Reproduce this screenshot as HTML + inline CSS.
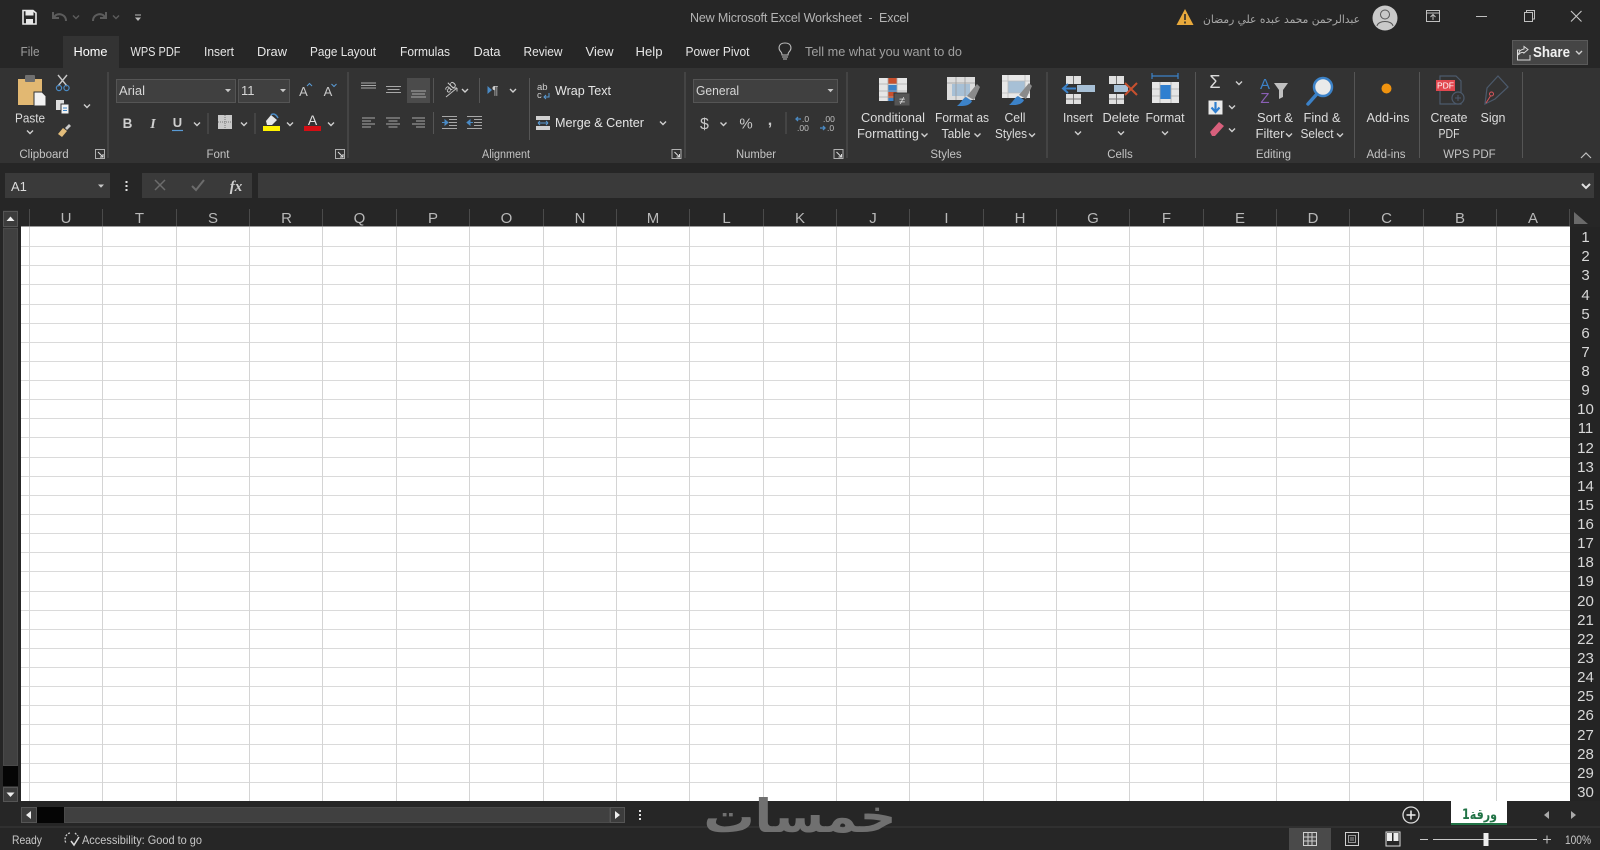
<!DOCTYPE html>
<html lang="en"><head><meta charset="utf-8"><title>New Microsoft Excel Worksheet - Excel</title>
<style>
html,body{margin:0;padding:0;background:#262626;width:1600px;height:850px;overflow:hidden}
svg{display:block}
text{font-family:"Liberation Sans",sans-serif;fill:#d6d6d6;font-size:13px}
.m{text-anchor:middle}
.l{font-size:11.5px;fill:#c4c4c4;text-anchor:middle}
.t{font-size:13px;fill:#e6e6e6}
.r{font-size:13px;fill:#dcdcdc;text-anchor:middle}
.h{font-size:15px;fill:#b8b8b8;text-anchor:middle}
.n{font-size:15px;fill:#d8d8d8;text-anchor:middle}
.s{stroke:#555;stroke-width:1;fill:none}
.li{stroke:#a8a8a8;stroke-width:1;fill:none}
</style></head><body>
<svg width="1600" height="850" viewBox="0 0 1600 850" xmlns="http://www.w3.org/2000/svg">
<defs>
<path id="c" d="M-3-1.5 0 1.5 3-1.5" fill="none" stroke="#cfcfcf" stroke-width="1.4"/>
<path id="cd" d="M-3-1.5 0 1.5 3-1.5" fill="none" stroke="#5c5c5c" stroke-width="1.4"/>
<path id="tri" d="M-3-1.5H3L0 1.8Z" fill="#c8c8c8"/>
<g id="lau"><path d="M-4.5-4.5H4.5V4.5H-4.5Z" fill="none" stroke="#b0b0b0"/><path d="M-2-2 3 3M3 0V3H0" fill="none" stroke="#dcdcdc"/></g>
</defs>

<rect width="1600" height="850" fill="#262626"/>
<!-- title bar -->
<path d="M23 10.500H33L36 13V24H23Z" fill="none" stroke="#e8e8e8" stroke-width="1.600"/>
<rect x="25.500" y="11" width="8" height="4.500" fill="#e8e8e8"/><rect x="26" y="19" width="7" height="5" fill="#e8e8e8"/>
<path d="M66 21C66 15 60 13 56 15L53 18M53 12V18H59" fill="none" stroke="#5c5c5c" stroke-width="2"/>
<use href="#cd" x="76" y="17"/>
<path d="M103 21C103 15 97 13 93 15L90 18M90 12V18H96" fill="none" stroke="#5c5c5c" stroke-width="2" transform="matrix(-1 0 0 1 196 0)"/>
<use href="#cd" x="116" y="17"/>
<path d="M135 15H141" stroke="#bbb"/><path d="M135 17.500H141L138 21Z" fill="#bbb"/>
<text x="690" y="22" style="font-size:12.500px;fill:#b4b4b4" textLength="219" lengthAdjust="spacing" xml:space="preserve">New Microsoft Excel Worksheet  -  Excel</text>
<path d="M1185 9 1193.500 25H1176.500Z" fill="#e8a93c"/><path d="M1185 14V20M1185 21.500V23.500" stroke="#2a2a2a" stroke-width="1.600"/>
<text x="1203" y="23" style="font-family:'DejaVu Sans',sans-serif;font-size:11px;fill:#a8a8a8" textLength="157" lengthAdjust="spacingAndGlyphs">عبدالرحمن محمد عبده علي رمضان</text>
<circle cx="1385" cy="18" r="12.500" fill="#c9c9c9"/><circle cx="1385" cy="14.500" r="4.500" fill="none" stroke="#555"/><path d="M1377 26C1378 20 1392 20 1393 26" fill="none" stroke="#555"/>
<path d="M1426.500 10.500H1439.500V21.500H1426.500ZM1426.500 13H1439.500M1433 20V15M1430.500 17 1433 14.500 1435.500 17" fill="none" stroke="#c0c0c0"/>
<path d="M1476 16.500H1487" stroke="#c0c0c0"/>
<path d="M1524.500 12.500H1532.500V21.500H1524.500ZM1526.500 12V10.500H1534.500V19H1533" fill="none" stroke="#c0c0c0"/>
<path d="M1571 11 1581.500 21.500M1581.500 11 1571 21.500" stroke="#c8c8c8" stroke-width="1.100"/>

<!-- tabs -->
<rect x="63" y="36" width="56" height="33" fill="#333"/>
<text x="20.500" y="56" style="fill:#9c9c9c" textLength="19" lengthAdjust="spacingAndGlyphs">File</text>
<text class="t" x="73.500" y="56" style="fill:#fff" textLength="34" lengthAdjust="spacingAndGlyphs">Home</text>
<text class="t" x="130.500" y="56" textLength="50" lengthAdjust="spacingAndGlyphs">WPS PDF</text>
<text class="t" x="204" y="56" textLength="30" lengthAdjust="spacingAndGlyphs">Insert</text>
<text class="t" x="257" y="56" textLength="30" lengthAdjust="spacingAndGlyphs">Draw</text>
<text class="t" x="310" y="56" textLength="66" lengthAdjust="spacingAndGlyphs">Page Layout</text>
<text class="t" x="400" y="56" textLength="50" lengthAdjust="spacingAndGlyphs">Formulas</text>
<text class="t" x="473.500" y="56" textLength="27" lengthAdjust="spacingAndGlyphs">Data</text>
<text class="t" x="523.500" y="56" textLength="39" lengthAdjust="spacingAndGlyphs">Review</text>
<text class="t" x="585.500" y="56" textLength="28" lengthAdjust="spacingAndGlyphs">View</text>
<text class="t" x="635.500" y="56" textLength="27" lengthAdjust="spacingAndGlyphs">Help</text>
<text class="t" x="685.500" y="56" textLength="64" lengthAdjust="spacingAndGlyphs">Power Pivot</text>
<path d="M781 52C778 49 778 43 785 43S792 49 789 52C788 53 788 54 788 55H782C782 54 782 53 781 52ZM782 57H788M783 59H787" fill="none" stroke="#bdbdbd" stroke-width="1.100"/>
<text x="805" y="56" style="fill:#a0a0a0" textLength="157" lengthAdjust="spacingAndGlyphs">Tell me what you want to do</text>
<rect x="1512.500" y="40.500" width="75" height="24" fill="#454545" stroke="#5a5a5a"/>
<path d="M1520 50H1517.500V60H1530V55M1524 46.500 1528 49.500 1524 53C1524 52 1520 52 1518.500 55C1519 50 1522 49.500 1524 49Z" fill="none" stroke="#dcdcdc"/>
<text x="1533" y="57" style="font-size:14.500px;font-weight:bold;fill:#f0f0f0" textLength="37" lengthAdjust="spacingAndGlyphs">Share</text>
<use href="#c" x="1579" y="52.500"/>

<!-- ribbon -->
<rect y="68" width="1600" height="95" fill="#333"/>
<path class="s" d="M108 72V158M348 72V158M685 72V158M847 72V158M1047 72V158M1195.500 72V158M1354.500 72V158M1419.500 72V158M1522.500 72V158"/>
<path class="s" d="M433.500 78V103M479.500 78V103M529.500 78V140M433.500 112V134M208 113V134M255 113V134M786 112V134"/>
<!-- clipboard -->
<path d="M18 79H42V105H18Z" fill="#e2b872"/><rect x="25" y="75" width="10" height="7" rx="1" fill="#6f6f6f"/>
<path d="M34 92H42L46 96V106H34Z" fill="#f2f2f2" stroke="#333"/>
<text class="r" x="30" y="122.500" textLength="30" lengthAdjust="spacingAndGlyphs">Paste</text><use href="#c" x="30" y="132"/>
<path d="M58 75 67 86M67 75 58 86" stroke="#c8c8c8" stroke-width="1.400"/><circle cx="59" cy="88" r="2.600" fill="none" stroke="#4a8ac4" stroke-width="1.200"/><circle cx="66.500" cy="88" r="2.600" fill="none" stroke="#4a8ac4" stroke-width="1.200"/>
<path d="M56 100H64V110H56Z" fill="#ddd"/><path d="M61 104H69V114H61Z" fill="#f2f2f2" stroke="#333"/><path d="M63 108H67M63 110.500H67" stroke="#3c86c8"/>
<path d="M62 137 58 134 63 128 67 131Z" fill="#e3bd7b"/><path d="M65 128 69 124 71 126 67 130Z" fill="#ccc"/>
<use href="#c" x="87" y="106"/>
<text class="l" x="44" y="158">Clipboard</text><use href="#lau" x="100" y="154"/>
<!-- font -->
<rect x="116.500" y="79.500" width="119" height="23" fill="#404040" stroke="#555"/>
<text x="119" y="95" style="fill:#d6d6d6">Arial</text><use href="#tri" x="228" y="90.500"/>
<rect x="238.500" y="79.500" width="51" height="23" fill="#404040" stroke="#555"/>
<text x="241" y="95">11</text><use href="#tri" x="283" y="90.500"/>
<text class="m" x="303.500" y="96" style="font-size:13px;fill:#c8c8c8">A</text><path d="M307 86 309.500 83.500 312 86" fill="none" stroke="#5a9bd5"/>
<text class="m" x="328" y="96" style="font-size:13px;fill:#c8c8c8">A</text><path d="M331.500 84 334 86.500 336.500 84" fill="none" stroke="#5a9bd5"/>
<text class="m" x="127.500" y="128" style="font-size:13.500px;font-weight:bold;fill:#d0d0d0">B</text>
<text class="m" x="153" y="128" style="font-size:14px;font-weight:bold;font-style:italic;font-family:'Liberation Serif',serif;fill:#d0d0d0">I</text>
<text class="m" x="177.500" y="127" style="font-size:13px;font-weight:bold;fill:#d0d0d0">U</text><path d="M172 130.500H183" stroke="#5a9bd5" stroke-width="1.200"/>
<use href="#c" x="197" y="124"/>
<rect x="218" y="115" width="14" height="14" fill="#c9c9c9"/><path d="M225 115V129M218 122H232" stroke="#777" stroke-dasharray="1 1"/>
<use href="#c" x="244" y="124"/>
<path d="M266 121 271 115 277 120 272 125H267Z" fill="#e6e6e6"/><path d="M271 115C273 113 276 114 278 118" fill="none" stroke="#4a8ac4" stroke-width="1.500"/>
<rect x="263" y="126" width="17" height="5" fill="#fff200"/><use href="#c" x="290" y="124"/>
<text class="m" x="312.500" y="125" style="font-size:14px;fill:#e0e0e0">A</text><rect x="304" y="126" width="17" height="5" fill="#d40e14"/><use href="#c" x="331" y="124"/>
<text class="l" x="218" y="158">Font</text><use href="#lau" x="340" y="154"/>
<!-- alignment -->
<rect x="407" y="78" width="23" height="25" fill="#4b4b4b"/>
<path class="li" d="M361 83H376M361 85.500H376M361 88H376"/>
<path class="li" d="M386 86.500H401M387.500 89.500H399.500M386 92.500H401"/>
<path class="li" d="M411 91H426M412 94H425M411 97H426"/>
<text x="446" y="92" transform="rotate(-45 449 90)" style="font-size:11px;fill:#cfcfcf">ab</text><path d="M446 97 457 88M457 88V91.500M457 88H453.500" fill="none" stroke="#c0c0c0"/>
<use href="#c" x="465" y="90.500"/>
<path d="M487.500 86V94L492 90Z" fill="#4a8ac4"/><text x="492" y="94.500" style="font-size:12px;fill:#cfcfcf">¶</text>
<use href="#c" x="513" y="90.500"/>
<path class="li" d="M362 118H375M362 121H371M362 124H375M362 127H371"/>
<path class="li" d="M386 118H400M388.500 121H397.500M386 124H400M388.500 127H397.500"/>
<path class="li" d="M412 118H425M416 121H425M412 124H425M416 127H425"/>
<path class="li" d="M442 116.500H457M449 119.500H457M449 122.500H457M449 125.500H457M442 128.500H457"/><path d="M442 122.500H447M445 120 448 122.500 445 125Z" fill="#4a8ac4" stroke="#4a8ac4"/>
<path class="li" d="M467 116.500H482M474 119.500H482M474 122.500H482M474 125.500H482M467 128.500H482"/><path d="M468 122.500H473M470 120 467 122.500 470 125Z" fill="#4a8ac4" stroke="#4a8ac4"/>
<text x="537" y="90" style="font-size:9.500px;fill:#cfcfcf">ab</text><text x="537" y="98" style="font-size:9.500px;fill:#cfcfcf">c</text><path d="M549 93V97H544M546 95 544 97 546 99" fill="none" stroke="#5a9bd5"/>
<text class="t" x="555" y="95" textLength="56" lengthAdjust="spacingAndGlyphs">Wrap Text</text>
<rect x="536" y="116" width="14" height="14" fill="#d0d0d0"/><rect x="536" y="120" width="14" height="6" fill="#333"/><path d="M538 123H548M538 123 540 121M538 123 540 125M548 123 546 121M548 123 546 125" fill="none" stroke="#5a9bd5"/>
<text class="t" x="555" y="127" textLength="89" lengthAdjust="spacingAndGlyphs">Merge &amp; Center</text><use href="#c" x="663" y="123"/>
<text class="l" x="506" y="158" textLength="48" lengthAdjust="spacingAndGlyphs">Alignment</text><use href="#lau" x="676.500" y="154"/>
<!-- number -->
<rect x="693.500" y="79.500" width="144" height="23" fill="#404040" stroke="#555"/>
<text x="696" y="95" textLength="43" lengthAdjust="spacingAndGlyphs">General</text><use href="#tri" x="830.500" y="90.500"/>
<text class="m" x="704.500" y="129" style="font-size:16px;fill:#c8c8c8">$</text><use href="#c" x="723.500" y="124"/>
<text class="m" x="746" y="128.500" style="font-size:15px;fill:#c8c8c8">%</text>
<text class="m" x="770" y="125" style="font-size:16px;font-weight:bold;fill:#c8c8c8">,</text>
<text x="802" y="122" style="font-size:8.500px;fill:#c0c0c0">.0</text><text x="797" y="131" style="font-size:8.500px;fill:#c0c0c0">.00</text><path d="M796 119H801M798 117 796 119 798 121" fill="none" stroke="#4a8ac4" stroke-width="1.300"/>
<text x="823" y="122" style="font-size:8.500px;fill:#c0c0c0">.00</text><text x="827" y="131" style="font-size:8.500px;fill:#c0c0c0">.0</text><path d="M820 128H825M823 126 825 128 823 130" fill="none" stroke="#4a8ac4" stroke-width="1.300"/>
<text class="l" x="756" y="158" textLength="40" lengthAdjust="spacingAndGlyphs">Number</text><use href="#lau" x="838.500" y="154"/>
<!-- styles -->
<rect x="879" y="78" width="28" height="23" fill="#e6e6e6"/>
<rect x="888" y="78" width="9" height="6" fill="#c8502e"/><rect x="888" y="85" width="9" height="7" fill="#3c82c8"/><rect x="888" y="92" width="9" height="6" fill="#c8502e"/><rect x="888" y="98" width="9" height="3" fill="#3c82c8"/>
<path d="M879 84H907M879 91H907M879 97H907M888 78V101M897 78V101" stroke="#aaa" stroke-width=".8"/>
<rect x="894" y="93" width="16" height="13" fill="#555" stroke="#333"/><text class="m" x="902" y="104" style="font-size:11px;fill:#e6e6e6">≠</text>
<rect x="947" y="77" width="28" height="23" fill="#dcdcdc"/><rect x="952" y="84" width="18" height="12" fill="#a7c0d6"/><path d="M947 83H975M956 77V100M965 77V100" stroke="#999" stroke-width=".8"/>
<path d="M962 106C958 106 957 106 957 106 961 103 963 98 966 97L972 101C971 104 967 106 962 106Z" fill="#3c82c8"/><path d="M967 96 977 84 980 87 974 100Z" fill="#8a8a8a"/>
<rect x="1002" y="75" width="28" height="23" fill="#e8e8e8"/><rect x="1008" y="81" width="17" height="12" fill="#a7c0d6"/><path d="M1002 81H1030M1008 75V98M1025 75V98M1002 93H1030" stroke="#bbb" stroke-width=".8"/>
<path d="M1014 105C1010 105 1009 105 1009 105 1013 102 1015 97 1018 96L1024 100C1023 103 1019 105 1014 105Z" fill="#3c82c8"/><path d="M1019 95 1029 83 1032 86 1026 99Z" fill="#8a8a8a"/>
<text class="r" x="893" y="122" textLength="64" lengthAdjust="spacingAndGlyphs">Conditional</text><text class="r" x="888" y="138" textLength="62" lengthAdjust="spacingAndGlyphs">Formatting</text><use href="#c" x="924.500" y="135"/>
<text class="r" x="962" y="122" textLength="54" lengthAdjust="spacingAndGlyphs">Format as</text><text class="r" x="956" y="138" textLength="29" lengthAdjust="spacingAndGlyphs">Table</text><use href="#c" x="977.500" y="135"/>
<text class="r" x="1015" y="122" textLength="21" lengthAdjust="spacingAndGlyphs">Cell</text><text class="r" x="1011" y="138" textLength="32" lengthAdjust="spacingAndGlyphs">Styles</text><use href="#c" x="1032" y="135"/>
<text class="l" x="946" y="158">Styles</text>
<!-- cells -->
<rect x="1066" y="76" width="15" height="8" fill="#e0e0e0"/><rect x="1066" y="94" width="15" height="10" fill="#e0e0e0"/><path d="M1073.500 76V84M1073.500 94V104M1066 99H1081" stroke="#777"/>
<rect x="1077" y="85" width="18" height="7" fill="#a7c0d6"/><path d="M1064 88.500H1076M1068 84 1063 88.500 1068 93" fill="none" stroke="#3c82c8" stroke-width="2"/>
<rect x="1109" y="76" width="15" height="8" fill="#e0e0e0"/><rect x="1109" y="94" width="15" height="10" fill="#e0e0e0"/><path d="M1116.500 76V84M1116.500 94V104M1109 99H1124" stroke="#777"/>
<rect x="1114" y="85" width="14" height="7" fill="#a7c0d6"/><path d="M1125 83 1137 95M1137 83 1125 95" stroke="#c8502e" stroke-width="2"/>
<path d="M1152 76H1178M1152 73V79M1178 73V79M1156 76H1174" stroke="#3c82c8" stroke-width="1.200" fill="none"/>
<rect x="1152" y="82" width="27" height="21" fill="#e6e6e6"/><rect x="1160" y="85" width="11" height="14" fill="#2f7fd0"/><path d="M1160 82V103M1171 82V103M1152 89H1160M1171 89H1179M1152 96H1160M1171 96H1179" stroke="#aaa" stroke-width=".8"/>
<text class="r" x="1078" y="122" textLength="30" lengthAdjust="spacingAndGlyphs">Insert</text><use href="#c" x="1078" y="133"/>
<text class="r" x="1121" y="122" textLength="37" lengthAdjust="spacingAndGlyphs">Delete</text><use href="#c" x="1121" y="133"/>
<text class="r" x="1165" y="122" textLength="39" lengthAdjust="spacingAndGlyphs">Format</text><use href="#c" x="1165" y="133"/>
<text class="l" x="1120" y="158">Cells</text>
<!-- editing -->
<text class="m" x="1215" y="88" style="font-size:18px;fill:#dcdcdc">Σ</text><use href="#c" x="1239" y="83"/>
<rect x="1208.500" y="100.500" width="14" height="14" fill="#eaeaea"/><path d="M1215.500 102V111M1211.500 107.500 1215.500 112 1219.500 107.500" fill="none" stroke="#2f7fd0" stroke-width="2.200"/>
<use href="#c" x="1232" y="107"/>
<path d="M1210 132 1219 122 1224 126 1215 136H1212Z" fill="#d8607c"/><use href="#c" x="1232" y="130"/>
<text class="m" x="1265" y="89" style="font-size:15px;fill:#3c82c8">A</text><text class="m" x="1265" y="103" style="font-size:15px;fill:#8a5fb5">Z</text>
<path d="M1274 83H1288L1283 90V97L1279 99V90Z" fill="#c0c0c0"/>
<text class="r" x="1275" y="122" textLength="36" lengthAdjust="spacingAndGlyphs">Sort &amp;</text><text class="r" x="1270" y="138" textLength="29" lengthAdjust="spacingAndGlyphs">Filter</text><use href="#c" x="1289" y="135"/>
<path d="M1316 95 1308 104" stroke="#3c82c8" stroke-width="3.500" stroke-linecap="round"/><circle cx="1323" cy="87" r="9" fill="#eaeaea" stroke="#3c82c8" stroke-width="2.500"/>
<text class="r" x="1322" y="122" textLength="37" lengthAdjust="spacingAndGlyphs">Find &amp;</text><text class="r" x="1317" y="138" textLength="33" lengthAdjust="spacingAndGlyphs">Select</text><use href="#c" x="1340" y="135"/>
<text class="l" x="1273.500" y="158">Editing</text>
<!-- add-ins -->
<circle cx="1386.500" cy="88.500" r="5" fill="#f0930f"/>
<text class="r" x="1388" y="122" textLength="43" lengthAdjust="spacingAndGlyphs">Add-ins</text><text class="l" x="1386" y="158">Add-ins</text>
<!-- wps -->
<path d="M1440 76H1456L1461 81V104H1440Z" fill="none" stroke="#4c5a6c" stroke-width="1.200"/>
<rect x="1436" y="80" width="19" height="11" fill="#e2474f"/><text class="m" x="1445.500" y="88.500" style="font-size:8.500px;fill:#fff">PDF</text>
<circle cx="1458" cy="98" r="6" fill="#333" stroke="#4c5a6c" stroke-width="1.200"/><path d="M1458 95V101M1455 98H1461" stroke="#4c5a6c"/>
<path d="M1485 104 1487 88 1498 76 1508 87 1495 99Z" fill="none" stroke="#4c5a6c" stroke-width="1.200"/><circle cx="1491.500" cy="94" r="2" fill="none" stroke="#d8555c"/><path d="M1486 103 1490.500 96" stroke="#d8555c"/>
<text class="r" x="1449" y="122" textLength="37" lengthAdjust="spacingAndGlyphs">Create</text><text class="r" x="1449" y="138" textLength="21" lengthAdjust="spacingAndGlyphs">PDF</text>
<text class="r" x="1493" y="122" textLength="25" lengthAdjust="spacingAndGlyphs">Sign</text>
<text class="l" x="1469.500" y="158">WPS PDF</text>
<path d="M1581 158 1586 153 1591 158" fill="none" stroke="#c0c0c0" stroke-width="1.200"/>

<!-- formula bar -->
<rect x="5" y="173" width="105" height="25" fill="#3a3a3a"/>
<text x="11" y="191" style="fill:#dcdcdc">A1</text><use href="#tri" x="101" y="186"/>
<path d="M126.500 181V183M126.500 185V187M126.500 189V191" stroke="#e0e0e0" stroke-width="2"/>
<rect x="142" y="173" width="110" height="25" fill="#3a3a3a"/>
<path d="M155 180 165 190M165 180 155 190" stroke="#6c6c6c" stroke-width="1.500"/>
<path d="M192 186 196 190 204 180" fill="none" stroke="#6c6c6c" stroke-width="2"/>
<text class="m" x="236" y="191" style="font-family:'Liberation Serif',serif;font-style:italic;font-weight:bold;font-size:15px;fill:#d0d0d0">fx</text>
<rect x="258" y="173" width="1336" height="25" fill="#3a3a3a"/>
<path d="M1582 184 1586 188 1590 184" fill="none" stroke="#e0e0e0" stroke-width="2"/>

<!-- grid -->
<rect x="21" y="227" width="1549" height="574" fill="#fff"/>
<path stroke="#dadada" stroke-width="1" fill="none" d="M21 246.500H1570M21 265.500H1570M21 284.500H1570M21 304.500H1570M21 323.500H1570M21 342.500H1570M21 361.500H1570M21 380.500H1570M21 399.500H1570M21 418.500H1570M21 437.500H1570M21 457.500H1570M21 476.500H1570M21 495.500H1570M21 514.500H1570M21 533.500H1570M21 552.500H1570M21 571.500H1570M21 591.500H1570M21 610.500H1570M21 629.500H1570M21 648.500H1570M21 667.500H1570M21 686.500H1570M21 705.500H1570M21 724.500H1570M21 744.500H1570M21 763.500H1570M21 782.500H1570"/>
<path stroke="#d4d4d4" stroke-width="1" fill="none" d="M29.500 227V801M102.500 227V801M176.500 227V801M249.500 227V801M322.500 227V801M396.500 227V801M469.500 227V801M543.500 227V801M616.500 227V801M689.500 227V801M763.500 227V801M836.500 227V801M909.500 227V801M983.500 227V801M1056.500 227V801M1129.500 227V801M1203.500 227V801M1276.500 227V801M1349.500 227V801M1423.500 227V801M1496.500 227V801"/>
<!-- col header -->
<path stroke="#4a4a4a" fill="none" d="M29.500 209V227M102.500 209V227M176.500 209V227M249.500 209V227M322.500 209V227M396.500 209V227M469.500 209V227M543.500 209V227M616.500 209V227M689.500 209V227M763.500 209V227M836.500 209V227M909.500 209V227M983.500 209V227M1056.500 209V227M1129.500 209V227M1203.500 209V227M1276.500 209V227M1349.500 209V227M1423.500 209V227M1496.500 209V227M1569.500 209V227"/>
<path d="M21 226.500H1570" stroke="#9a9a9a"/>
<g>
<text class="h" x="66" y="223">U</text><text class="h" x="139.500" y="223">T</text><text class="h" x="213" y="223">S</text><text class="h" x="286.500" y="223">R</text><text class="h" x="359.500" y="223">Q</text><text class="h" x="433" y="223">P</text><text class="h" x="506.500" y="223">O</text><text class="h" x="580" y="223">N</text><text class="h" x="653" y="223">M</text><text class="h" x="726.500" y="223">L</text><text class="h" x="800" y="223">K</text><text class="h" x="873" y="223">J</text><text class="h" x="946.500" y="223">I</text><text class="h" x="1020" y="223">H</text><text class="h" x="1093" y="223">G</text><text class="h" x="1166.500" y="223">F</text><text class="h" x="1240" y="223">E</text><text class="h" x="1313" y="223">D</text><text class="h" x="1386.500" y="223">C</text><text class="h" x="1460" y="223">B</text><text class="h" x="1533" y="223">A</text>
</g>
<path d="M1574 212V224H1588Z" fill="#6a6a6a"/>
<!-- row header -->
<rect x="1570" y="227" width="30" height="574" fill="#242424"/>
<text class="n" x="1585.500" y="242">1</text><text class="n" x="1585.500" y="261">2</text><text class="n" x="1585.500" y="280">3</text><text class="n" x="1585.500" y="300">4</text><text class="n" x="1585.500" y="319">5</text><text class="n" x="1585.500" y="338">6</text><text class="n" x="1585.500" y="357">7</text><text class="n" x="1585.500" y="376">8</text><text class="n" x="1585.500" y="395">9</text><text class="n" x="1585.500" y="414">10</text><text class="n" x="1585.500" y="433">11</text><text class="n" x="1585.500" y="453">12</text><text class="n" x="1585.500" y="472">13</text><text class="n" x="1585.500" y="491">14</text><text class="n" x="1585.500" y="510">15</text><text class="n" x="1585.500" y="529">16</text><text class="n" x="1585.500" y="548">17</text><text class="n" x="1585.500" y="567">18</text><text class="n" x="1585.500" y="586">19</text><text class="n" x="1585.500" y="606">20</text><text class="n" x="1585.500" y="625">21</text><text class="n" x="1585.500" y="644">22</text><text class="n" x="1585.500" y="663">23</text><text class="n" x="1585.500" y="682">24</text><text class="n" x="1585.500" y="701">25</text><text class="n" x="1585.500" y="720">26</text><text class="n" x="1585.500" y="740">27</text><text class="n" x="1585.500" y="759">28</text><text class="n" x="1585.500" y="778">29</text><text class="n" x="1585.500" y="797">30</text>
<!-- v scroll -->
<rect x="3" y="210" width="15" height="592" fill="#2d2d2d"/>
<rect x="3.500" y="211.500" width="14" height="15" fill="#3c3c3c" stroke="#555"/><path d="M6.500 221H14.500L10.500 216.500Z" fill="#eee"/>
<rect x="3.500" y="228.500" width="14" height="537" fill="#404040" stroke="#4a4a4a"/>
<rect x="3" y="766" width="15" height="20" fill="#050505"/>
<rect x="3.500" y="787.500" width="14" height="14" fill="#3c3c3c" stroke="#555"/><path d="M6.500 792.500H14.500L10.500 797Z" fill="#eee"/>
<!-- h scroll -->
<rect x="21.500" y="807.500" width="15" height="15" fill="#3c3c3c" stroke="#555"/><path d="M31 811V819L26 815Z" fill="#eee"/>
<rect x="37" y="807" width="27" height="16" fill="#050505"/>
<rect x="64.500" y="807.500" width="545" height="15" fill="#404040" stroke="#4a4a4a"/>
<rect x="610.500" y="807.500" width="14" height="15" fill="#3c3c3c" stroke="#555"/><path d="M615 811V819L620 815Z" fill="#eee"/>
<path d="M640 810V812M640 814V816M640 818V820" stroke="#e0e0e0" stroke-width="2"/>
<rect y="826.500" x="0" width="1600" height="1" fill="#3a3a3a"/>
<!-- sheet tab -->
<circle cx="1411" cy="815" r="8" fill="none" stroke="#dcdcdc" stroke-width="1.300"/><path d="M1411 810.500V819.500M1406.500 815H1415.500" stroke="#eee" stroke-width="1.500"/>
<rect x="1451" y="801" width="56" height="24" fill="#fff"/><rect x="1451" y="823" width="56" height="2" fill="#217346"/>
<text x="1462" y="819" style="font-family:'DejaVu Sans',sans-serif;font-size:14px;font-weight:bold;fill:#217346" textLength="35" lengthAdjust="spacingAndGlyphs">ورقة1</text>
<path d="M1549 811V819L1544 815Z" fill="#aaa"/><path d="M1571 811V819L1576 815Z" fill="#aaa"/>
<!-- watermark -->
<text x="800" y="832" class="m" style="font-family:'DejaVu Sans',sans-serif;font-weight:bold;font-size:46px;fill:#707070" textLength="193" lengthAdjust="spacingAndGlyphs">خمسات</text>
<!-- status bar -->
<text x="12" y="844" style="font-size:12px;fill:#c8c8c8" textLength="30" lengthAdjust="spacingAndGlyphs">Ready</text>
<path d="M70 833C65 834 64 840 66 843M75 833 78 836" fill="none" stroke="#c8c8c8" stroke-dasharray="2 1.300" stroke-width="1.300"/><path d="M71 841 74 845 79 837" fill="none" stroke="#dcdcdc" stroke-width="1.500"/>
<text x="82" y="844" style="font-size:12px;fill:#c8c8c8" textLength="120" lengthAdjust="spacingAndGlyphs">Accessibility: Good to go</text>
<rect x="1289" y="828" width="42" height="22" fill="#4a4a4a"/>
<path d="M1303.500 832.500H1316.500V845.500H1303.500ZM1308 832.500V845.500M1312 832.500V845.500M1303.500 837H1316.500M1303.500 841H1316.500" fill="none" stroke="#d0d0d0"/>
<path d="M1345.500 832.500H1358.500V845.500H1345.500Z" fill="none" stroke="#d0d0d0"/><path d="M1348.500 835.500H1355.500V842.500H1348.500ZM1350 838H1354M1350 840H1354" fill="none" stroke="#bbb" stroke-width=".8"/>
<rect x="1386" y="832" width="14" height="14" fill="none" stroke="#dcdcdc"/><rect x="1387" y="833" width="5" height="8" fill="#eee"/><rect x="1393.500" y="833" width="5" height="8" fill="#eee"/>
<path d="M1420 839.500H1428M1433 839.500H1537" stroke="#c8c8c8"/>
<rect x="1483.500" y="833" width="5" height="13" fill="#eee"/>
<path d="M1543 839.500H1551M1547 835.500V843.500" stroke="#c8c8c8"/>
<text x="1565" y="844" style="font-size:11.500px;fill:#c8c8c8" textLength="26" lengthAdjust="spacingAndGlyphs">100%</text>
</svg>
</body></html>
